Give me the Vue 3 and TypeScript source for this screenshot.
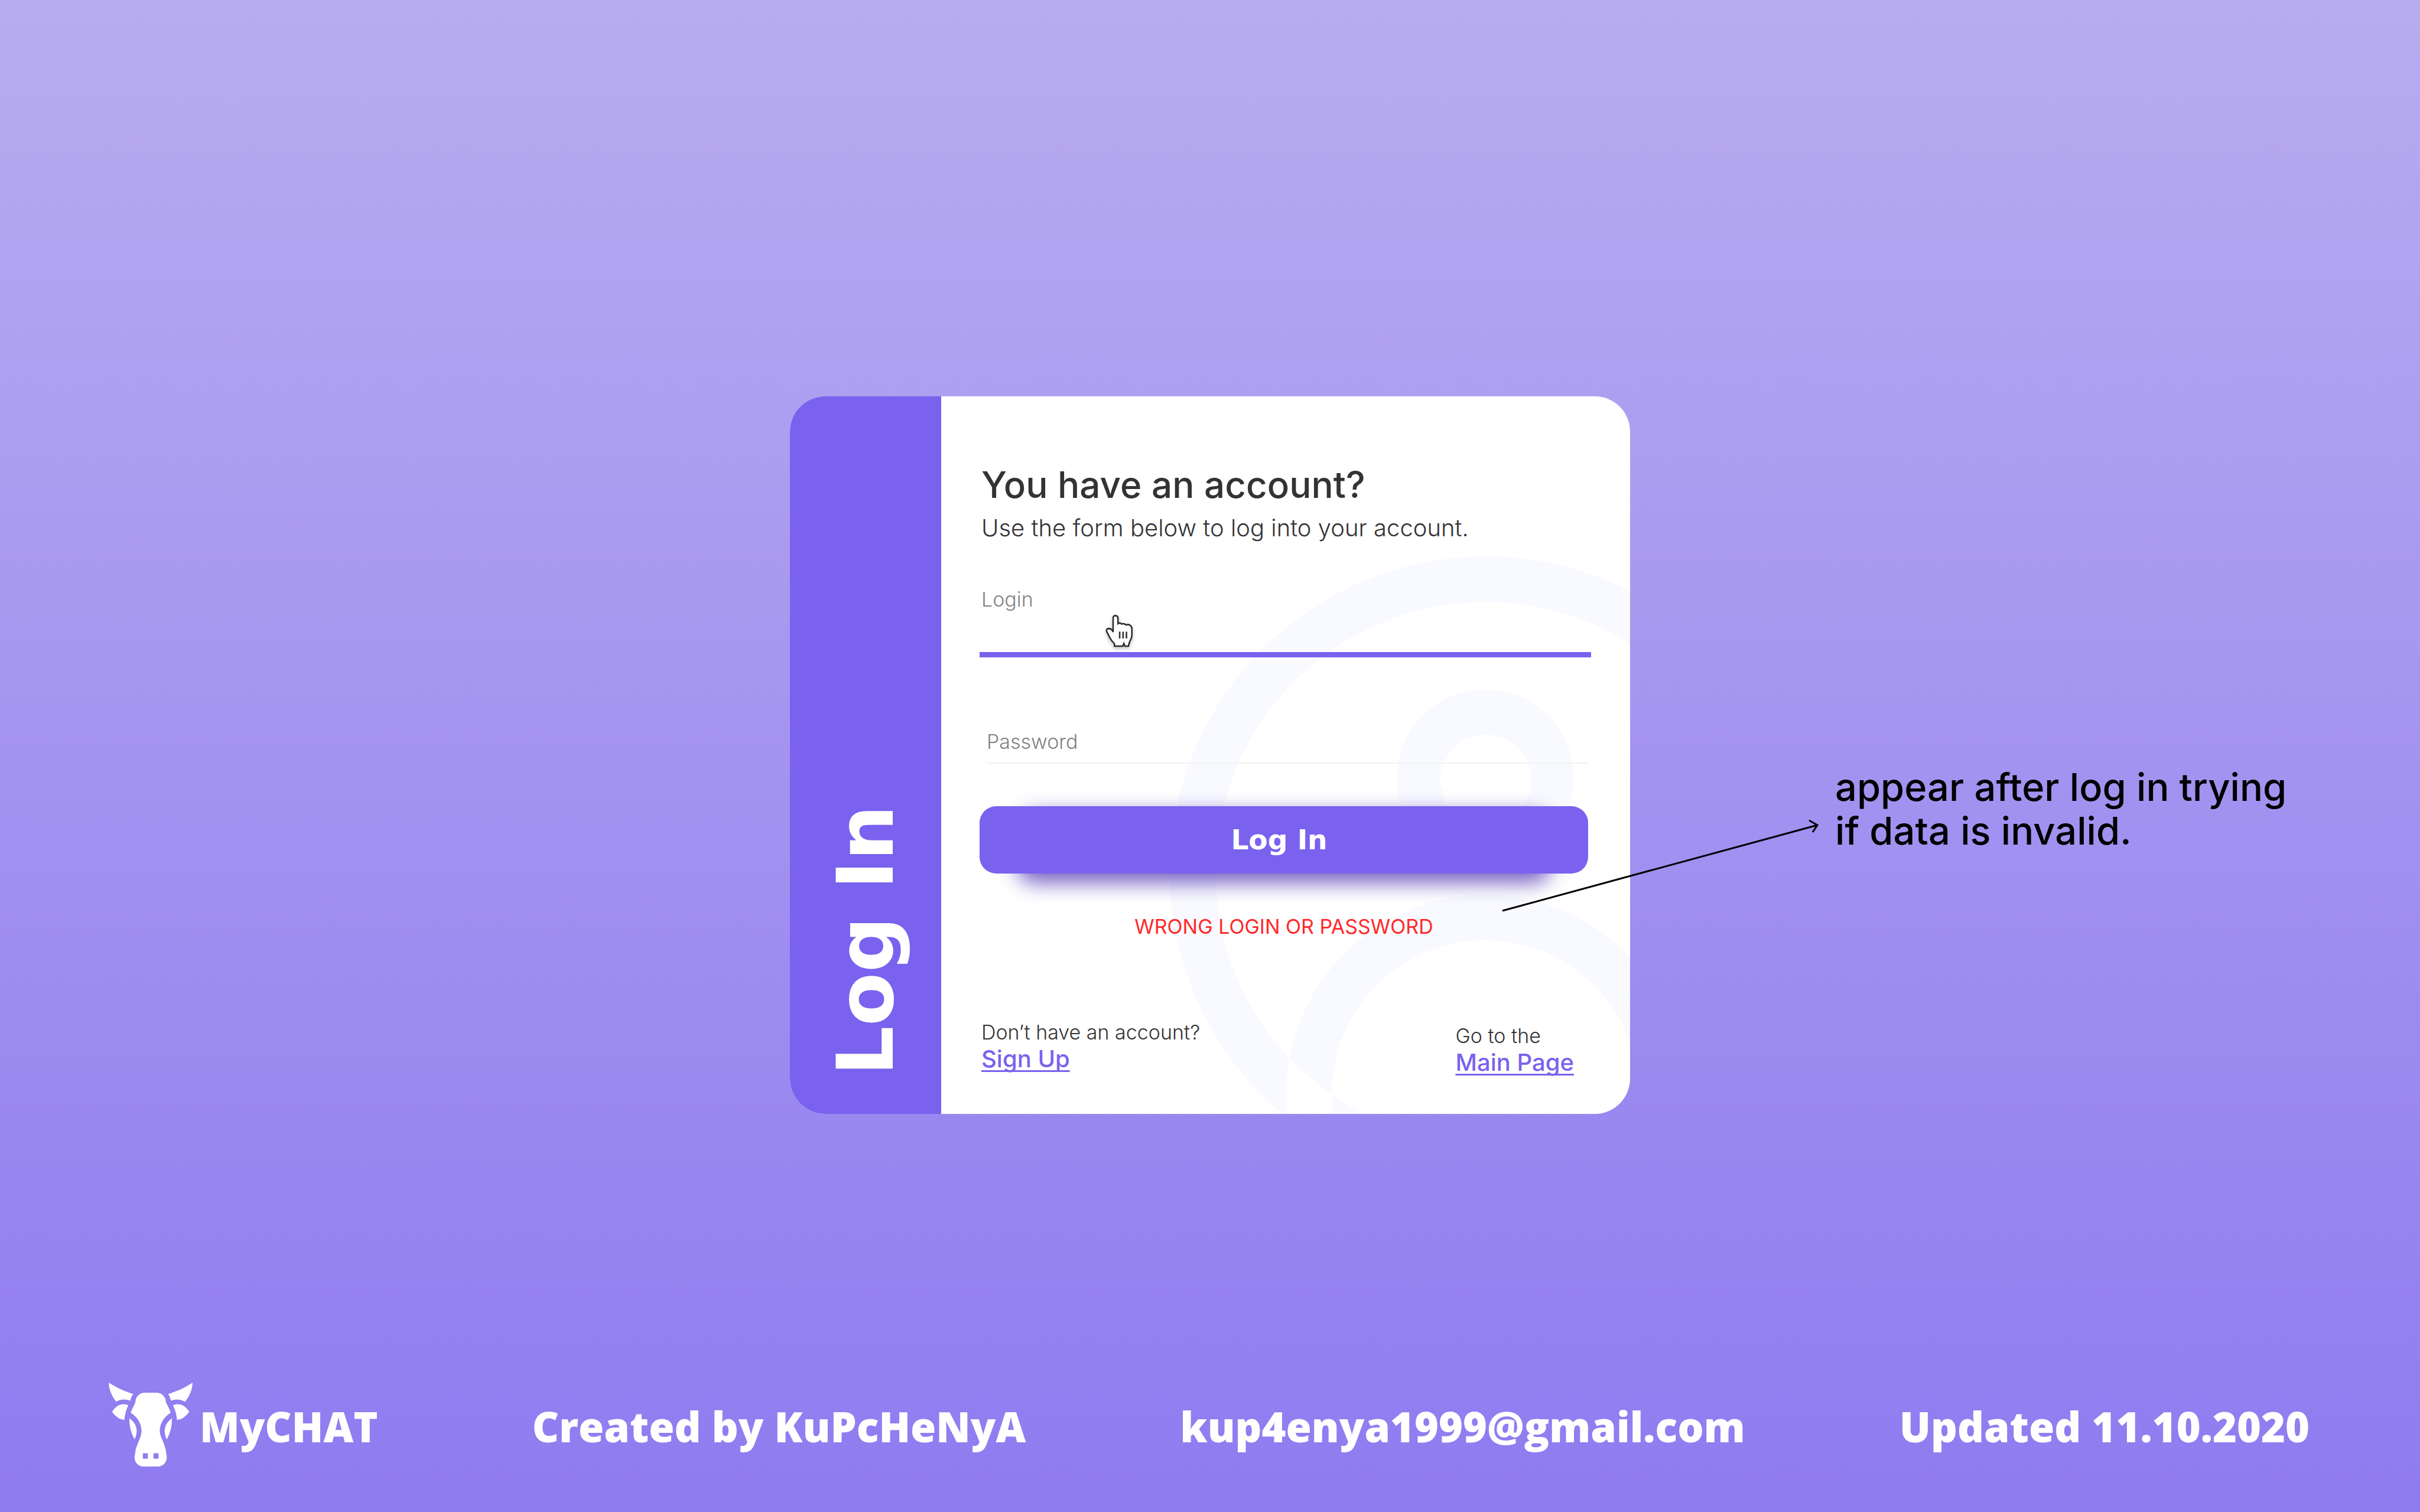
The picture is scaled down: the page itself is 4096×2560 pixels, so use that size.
<script setup lang="ts">
import { ref } from 'vue'

const login = ref('')
const password = ref('')
const failed = ref(true)

function submit(): void {
  failed.value = true
}
</script>

<template>
  <div class="page">
    <main class="card">
      <div class="side">
        <span class="side-title">Log In</span>
      </div>

      <section class="panel">
        <svg class="watermark" viewBox="0 0 1166 1215" aria-hidden="true">
          <path
            fill="#f9faff"
            fill-rule="evenodd"
            d="M387 806a535 535 0 0 1 1070 0a535 535 0 0 1-1070 0Z
               M464 806a458 458 0 0 1 916 0a458 458 0 0 1-916 0Z
               M771 646a150 150 0 0 1 300 0a150 150 0 0 1-300 0Z
               M845 650a77 77 0 0 1 154 0a77 77 0 0 1-154 0Z
               M584 1215V1181a337 337 0 0 1 674 0V1215H1181V1181a260 260 0 0 0-520 0V1215Z"
          />
        </svg>

        <form class="form" @submit.prevent="submit">
          <h1 class="title">You have an account?</h1>
          <p class="lead">Use the form below to log into your account.</p>

          <div class="field field-active">
            <label for="login">Login</label>
            <input id="login" v-model="login" type="text" autocomplete="username" />
            <svg class="pointer" viewBox="95 78 160 195" aria-hidden="true">
              <path
                fill="#fff"
                stroke="#2c2c2c"
                stroke-width="8"
                d="M149 251V238Q132 222 123 203L108 173Q103 157 120 157Q136 158 142 176V101Q143 88 155 88Q166 89 168 101V131Q178 124 188 133Q200 128 211 138Q226 132 236 143Q243 150 242 165V195Q240 212 230 228Q226 238 224 251H205L199 237L193 251Z"
              />
              <path fill="none" stroke="#2c2c2c" stroke-width="8" d="M177 174V210M195 174V210M213 174V210" />
            </svg>
          </div>

          <div class="field field-idle">
            <label for="password">Password</label>
            <input id="password" v-model="password" type="password" autocomplete="current-password" />
          </div>

          <div class="submit">
            <button type="submit">Log In</button>
          </div>

          <p v-if="failed" class="error" role="alert">WRONG LOGIN OR PASSWORD</p>

          <div class="links">
            <p>
              Don’t have an account?
              <a href="#signup">Sign Up</a>
            </p>
            <p class="home">
              Go to the
              <a href="#main">Main Page</a>
            </p>
          </div>
        </form>
      </section>
    </main>

    <aside class="note">
      <svg class="arrow" viewBox="0 0 540 170" aria-hidden="true">
        <path d="M3 162L536 17M522 9L536 17L528 29" fill="none" stroke="#000" stroke-width="3" />
      </svg>
      appear after log in trying<br />if data is invalid.
    </aside>

    <footer class="footer">
      <div class="brand">
        <svg class="logo" viewBox="45 57 450 450" aria-hidden="true">
          <g fill="#fff">
            <path d="M45 57C90 85 130 103 177 118Q165 131 161 154Q120 139 85 159Q46 110 45 57Z" />
            <path d="M495 57C450 87 410 103 364 118Q375 132 379 154Q418 139 455 159Q494 110 495 57Z" />
            <path d="M150 178C115 164 85 178 63 214Q95 256 129 257Q132 215 150 178Z" />
            <path d="M390 178C425 164 455 178 477 214Q445 256 411 257Q408 215 390 178Z" />
            <path d="M156 248C182 268 195 290 195 318Q195 340 184 362Q154 310 156 248Z" />
            <path d="M384 248C358 268 345 290 345 318Q345 340 356 362Q386 310 384 248Z" />
            <path
              fill-rule="evenodd"
              d="M236 111H304C333 113 352 135 352 163C364 184 373 203 377 219C338 243 319 280 319 318C320 350 341 370 351 420L356 455C358 485 336 507 308 507H232C204 507 182 485 184 455L189 420C199 380 220 350 221 318C221 280 202 243 163 219C168 200 180 182 188 163C188 135 207 113 236 111ZM228 436H255V465H228ZM285 436H312V465H285Z"
            />
          </g>
        </svg>
        <span>MyCHAT</span>
      </div>
      <span>Created by KuPcHeNyA</span>
      <a href="mailto:kup4enya1999@gmail.com">kup4enya1999@gmail.com</a>
      <span>Updated 11.10.2020</span>
    </footer>
  </div>
</template>

<style>
body {
  margin: 0;
}
</style>

<style scoped>
.page {
  box-sizing: border-box;
  min-height: 100vh;
  display: grid;
  grid-template-columns: 1fr minmax(0, 1422px) 1fr;
  grid-template-rows: 1fr auto 1fr;
  padding-bottom: 4px;
  background: linear-gradient(180deg, #b8acf0, #8f7bf0);
  font-family: Inter, "Liberation Sans", sans-serif;
}

p,
h1 {
  margin: 0;
}

.card {
  grid-area: 2 / 2;
  display: grid;
  grid-template-columns: 256px 1fr;
  border-radius: 60px;
  overflow: hidden;
  background: #fff;
}

.side {
  display: flex;
  align-items: flex-end;
  justify-content: center;
  padding-bottom: 64px;
  background: #7a62ee;
}

.side-title {
  writing-mode: vertical-rl;
  transform: rotate(180deg);
  font: 700 132px/160px "DejaVu Sans", sans-serif;
  color: #fff;
}

.panel {
  position: relative;
  padding: 112px 71px 63px 65px;
}

.watermark {
  position: absolute;
  right: 0;
  bottom: 0;
  width: 1166px;
  height: 1215px;
}

.form {
  position: relative;
  display: flex;
  flex-direction: column;
}

.title {
  padding-left: 3px;
  font-size: 62px;
  line-height: 76px;
  font-weight: 500;
  color: #333;
}

.lead {
  margin-top: 11px;
  padding-left: 3px;
  font-size: 40px;
  line-height: 48px;
  font-weight: 300;
  color: #333;
}

.field {
  position: relative;
  display: grid;
}

.field label,
.field input {
  grid-area: 1 / 1;
}

.field label {
  font-size: 34px;
  line-height: 42px;
  font-weight: 300;
  color: #828282;
}

.field input {
  box-sizing: border-box;
  width: 100%;
  margin: 0;
  padding: 0;
  border: 0;
  border-radius: 0;
  outline: 0;
  background: transparent;
  font: inherit;
  font-size: 34px;
}

.field-active {
  margin: 76px -5px 0 0;
}

.field-active label {
  padding-left: 3px;
}

.field-active input {
  height: 119px;
  padding-top: 42px;
  border-bottom: 9px solid #7a62ee;
}

.field-idle {
  margin: 122px 0 0 12px;
}

.field-idle input {
  height: 58px;
  border-bottom: 2px solid #f2f2f2;
}

.pointer {
  position: absolute;
  left: 211px;
  top: 45px;
  width: 51px;
  height: 62px;
  filter: drop-shadow(0 3px 3px rgba(0, 0, 0, 0.25));
}

.submit {
  position: relative;
  isolation: isolate;
  display: grid;
  margin-top: 72px;
}

.submit::before {
  content: "";
  position: absolute;
  z-index: -1;
  inset: 12px 64px -16px;
  border-radius: 28px;
  background: #7763c4;
  filter: blur(17px);
}

.submit button {
  height: 114px;
  padding: 0 16px 0 0;
  border: 0;
  border-radius: 28px;
  background: #7a62ee;
  font: 700 47px/56px "DejaVu Sans", sans-serif;
  color: #fff;
}

.error {
  margin-top: 69px;
  text-align: center;
  font-size: 34px;
  line-height: 42px;
  color: #ff2828;
}

.links {
  display: flex;
  justify-content: space-between;
  margin-top: 137px;
  padding: 0 24px 0 3px;
  font-size: 34px;
  line-height: 42px;
  font-weight: 300;
  color: #333;
}

.links .home {
  padding-top: 6px;
}

.links a {
  display: block;
  font-size: 40px;
  line-height: 48px;
  font-weight: 500;
  color: #7a62ee;
  text-decoration: underline 3px;
  text-underline-offset: 5px;
  text-decoration-skip-ink: none;
}

.note {
  grid-area: 2 / 3;
  align-self: center;
  position: relative;
  margin-top: 184px;
  padding-left: 347px;
  font-size: 65px;
  line-height: 74px;
  font-weight: 500;
  color: #000;
}

.arrow {
  position: absolute;
  left: -219px;
  top: 84px;
  width: 540px;
  height: 170px;
}

.footer {
  grid-area: 3 / 1 / 4 / 4;
  align-self: end;
  display: flex;
  align-items: center;
  justify-content: space-between;
  padding: 0 187px 73px 184px;
  font: 800 70px/96px "Open Sans", sans-serif;
  color: #fff;
}

.footer a,
.footer span {
  padding-top: 5px;
}

.footer a {
  color: inherit;
  text-decoration: none;
}

.brand {
  display: flex;
  align-items: center;
  gap: 12px;
}

.logo {
  width: 142px;
  height: 142px;
}
</style>
